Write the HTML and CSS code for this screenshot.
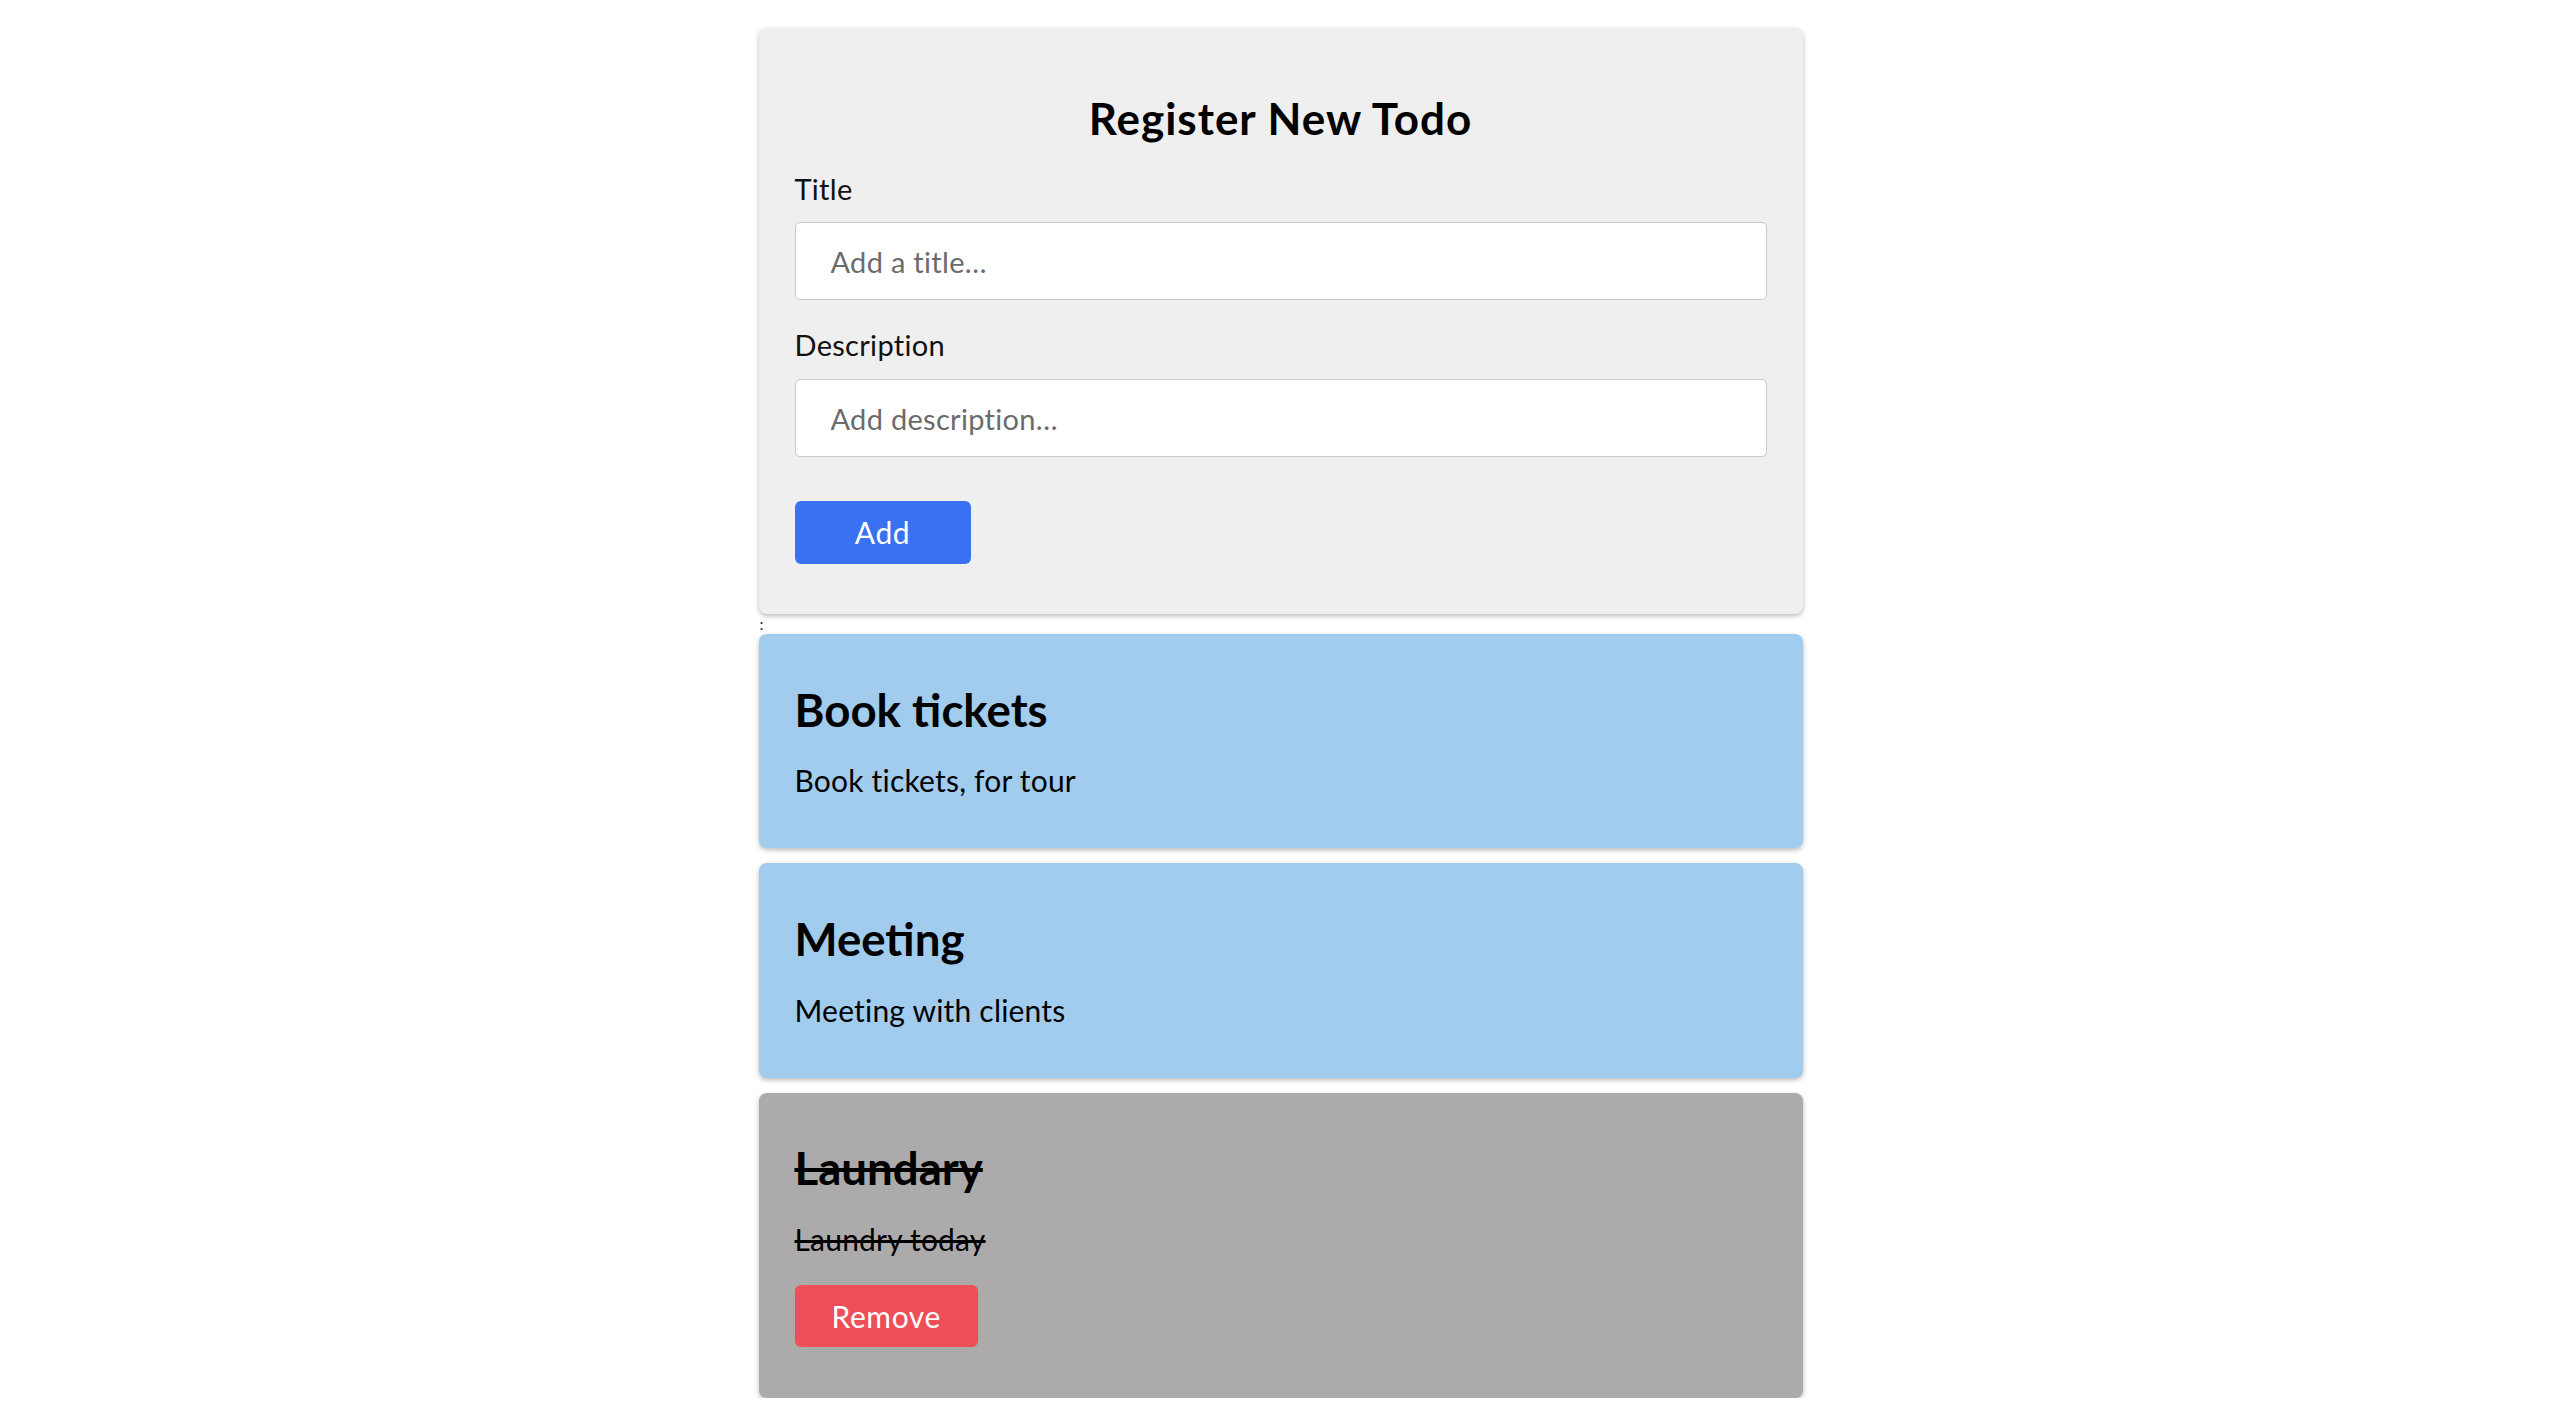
FILE: index.html
```html
<!DOCTYPE html>
<html lang="en">
<head>
<meta charset="utf-8">
<title>Todo</title>
<link rel="stylesheet" href="styles.css">
</head>
<body>
<div class="app">
  <form class="card form-card">
    <h1 class="form-title">Register New Todo</h1>
    <label class="field-label" for="title">Title</label>
    <input class="field-input" id="title" type="text" placeholder="Add a title…">
    <label class="field-label field-label--gap" for="desc">Description</label>
    <input class="field-input" id="desc" type="text" placeholder="Add description…">
    <button class="btn btn-add" type="button">Add</button>
  </form>
  <div class="sep">:</div>
  <div class="todo-list">
    <div class="card todo todo--open">
      <h2 class="todo-title">Book tickets</h2>
      <p class="todo-desc">Book tickets, for tour</p>
    </div>
    <div class="card todo todo--open">
      <h2 class="todo-title">Meeting</h2>
      <p class="todo-desc">Meeting with clients</p>
    </div>
    <div class="card todo todo--done">
      <h2 class="todo-title">Laundary</h2>
      <p class="todo-desc">Laundry today</p>
      <button class="btn btn-remove" type="button">Remove</button>
    </div>
  </div>
</div>
</body>
</html>
```
FILE: styles.css
```css
* { box-sizing: border-box; }

html, body {
  margin: 0;
  padding: 0;
  background: #ffffff;
}

body {
  font-family: Lato, "Open Sans", sans-serif;
  color: #000;
}

.app {
  width: 1044px;
  margin: 27.5px 0 0 calc(50% - 520px);
  display: flex;
  flex-direction: column;
}

.card {
  border-radius: 8px;
  box-shadow: 0 2px 5px rgba(0, 0, 0, 0.28);
}

.form-card {
  background: #efefef;
  padding: 36px 36px 50.5px;
  display: flex;
  flex-direction: column;
  align-items: flex-start;
}

.form-title {
  align-self: stretch;
  margin: 29.5px 0 27px;
  font-size: 44px;
  line-height: 51.6px;
  font-weight: 700;
  text-align: center;
  letter-spacing: 1px;
}

.field-label {
  display: block;
  font-size: 29px;
  line-height: 34.8px;
  margin-bottom: 16px;
  color: #111;
  letter-spacing: 0.3px;
}

.field-label--gap {
  margin-top: 28px;
}

.field-input {
  align-self: stretch;
  height: 78px;
  border: 1px solid #c9c9c9;
  border-radius: 5px;
  background: #fff;
  padding: 0 35px;
  font-family: inherit;
  font-size: 29px;
  color: #222;
  outline: none;
  letter-spacing: 0.3px;
}

.field-input::placeholder {
  color: #6b6b6b;
}

.btn {
  height: 62.5px;
  border: none;
  border-radius: 6px;
  color: #fff;
  font-family: inherit;
  font-size: 30px;
  line-height: 62.5px;
  letter-spacing: 0.6px;
  padding: 0;
  cursor: pointer;
}

.btn-add {
  margin-top: 44px;
  width: 176px;
  background: #3872f2;
}

.sep {
  height: 20px;
  font-size: 16px;
  line-height: 20px;
  color: #333;
  padding-left: 1px;
}

.todo-list {
  display: flex;
  flex-direction: column;
  gap: 15px;
}

.todo {
  padding: 48.5px 36px 51px;
  display: flex;
  flex-direction: column;
  align-items: flex-start;
}

.todo--open {
  background: #a1ccee;
}

.todo--done {
  background: #acaaab;
}

.todo-title {
  margin: 0 0 26px;
  font-size: 45.6px;
  line-height: 54.7px;
  font-weight: 700;
  letter-spacing: 0;
}

.todo-desc {
  margin: 0;
  font-size: 30px;
  line-height: 34px;
  letter-spacing: 0.2px;
}

.todo--done .todo-title,
.todo--done .todo-desc {
  text-decoration: line-through;
}

.btn-remove {
  margin-top: 29px;
  padding: 0 37px;
  background: #ee4e56;
}
```
